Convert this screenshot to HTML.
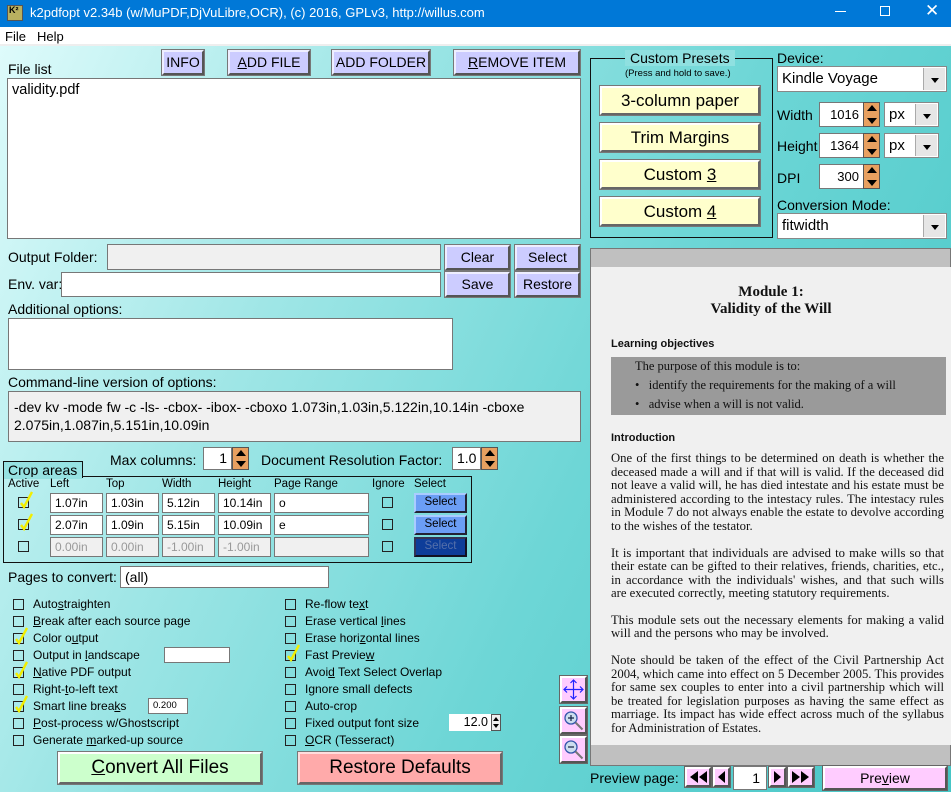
<!DOCTYPE html>
<html><head><meta charset="utf-8"><style>
*{box-sizing:border-box;margin:0;padding:0}
body{width:951px;height:792px;overflow:hidden;position:relative;font-family:"Liberation Sans","DejaVu Sans",sans-serif;font-size:13.5px;color:#000;background:#fff}
.a{position:absolute;white-space:nowrap}
#bg{position:absolute;left:0;top:46px;width:951px;height:746px;background:linear-gradient(115deg,#defbfb 0%,#9fe6e6 30%,#6dd6d6 60%,#45c6c6 100%)}
.btn{position:absolute;background:#ccccff;border:2px solid;border-color:#eeeeff #555 #555 #eeeeff;outline:1px solid #777;text-align:center;font-size:14px}
.in{position:absolute;background:#fff;border:1px solid #777;font-size:13.5px;padding-left:4px;white-space:nowrap;overflow:hidden}
.g{background:#f0f0f0}
.cb{position:absolute;width:11px;height:11px;border:1px solid #222;background:transparent}
.ck svg{position:absolute;left:0;top:-7px;overflow:visible}
.spin{position:absolute;width:17px;background:#e8a060;border:1px solid #555}
.spin::before{content:"";position:absolute;left:3px;top:2px;border-left:5px solid transparent;border-right:5px solid transparent;border-bottom:6px solid #000}
.spin::after{content:"";position:absolute;left:3px;bottom:2px;border-left:5px solid transparent;border-right:5px solid transparent;border-top:6px solid #000}
.sel{position:absolute;background:#fff;border:1px solid #888;font-size:15px;padding:3px 0 0 4px}
.sel b{position:absolute;right:1px;top:1px;bottom:1px;width:22px;background:#e6e6e6;border-left:1px solid #aaa}
.sel b::after{content:"";position:absolute;left:7px;top:10px;border-left:4px solid transparent;border-right:4px solid transparent;border-top:5px solid #000}
.yb{position:absolute;left:600px;width:160px;height:29px;background:#ffffcc;border:2px solid;border-color:#fff #666 #666 #fff;outline:1px solid #777;text-align:center;font-size:17px;line-height:25px}
.pk{position:absolute;background:#ffccff;border:2px solid;border-color:#fff #555 #555 #fff;outline:1px solid #666}
.pv{position:absolute;font-family:"Liberation Serif",serif;font-size:12.7px;white-space:nowrap;color:#111}
.j{text-align:justify;text-align-last:justify;width:333px;overflow:hidden}
u{text-decoration:underline}
</style></head><body>
<svg width="0" height="0" style="position:absolute"><defs><symbol id="ck" viewBox="0 0 14 18"><path d="M2 12l3 4 8-15" stroke="#f2ee00" stroke-width="2.4" fill="none"/></symbol></defs></svg>
<div class="a" style="left:0;top:0;width:951px;height:27px;background:#0078d7"></div>
<div class="a" style="left:7px;top:5px;width:16px;height:16px;background:#b8b060;border:1px solid #555;font-size:9px;font-weight:bold;line-height:9px;padding-left:1px">K²</div>
<div class="a" style="left:30px;top:5px;color:#fff;font-size:13px">k2pdfopt v2.34b (w/MuPDF,DjVuLibre,OCR), (c) 2016, GPLv3, http://willus.com</div>
<div class="a" style="left:835px;top:11px;width:11px;height:1px;background:#fff"></div>
<div class="a" style="left:880px;top:6px;width:10px;height:10px;border:1px solid #fff"></div>
<div class="a" style="left:925px;top:1px;color:#fff;font-size:17px">✕</div>
<div class="a" style="left:0;top:27px;width:951px;height:19px;background:#fff"></div>
<div class="a" style="left:5px;top:29px;font-size:13px">File</div>
<div class="a" style="left:37px;top:29px;font-size:13px">Help</div>
<div class="a" style="left:0;top:44px;width:951px;height:2px;background:#eee"></div>
<div id="bg"></div>

<div class="btn" style="left:162px;top:50px;width:42px;height:25px;line-height:21px">INFO</div>
<div class="btn" style="left:228px;top:50px;width:82px;height:25px;line-height:21px"><u>A</u>DD FILE</div>
<div class="btn" style="left:332px;top:50px;width:98px;height:25px;line-height:21px">ADD FOLDER</div>
<div class="btn" style="left:454px;top:50px;width:126px;height:25px;line-height:21px"><u>R</u>EMOVE ITEM</div>
<div class="a" style="left:8px;top:61px;font-size:14px">File list</div>
<div class="in" style="left:7px;top:78px;width:574px;height:161px;padding:3px 4px;font-size:14.5px">validity.pdf</div>

<div class="a" style="left:8px;top:249px;font-size:14px">Output Folder:</div>
<div class="in g" style="left:107px;top:244px;width:334px;height:26px"></div>
<div class="btn" style="left:445px;top:245px;width:65px;height:25px;line-height:21px">Clear</div>
<div class="btn" style="left:515px;top:245px;width:65px;height:25px;line-height:21px">Select</div>
<div class="a" style="left:8px;top:276px;font-size:14px">Env. var:</div>
<div class="in" style="left:61px;top:272px;width:380px;height:25px"></div>
<div class="btn" style="left:445px;top:272px;width:65px;height:25px;line-height:21px">Save</div>
<div class="btn" style="left:515px;top:272px;width:65px;height:25px;line-height:21px">Restore</div>
<div class="a" style="left:8px;top:301px;font-size:14px">Additional options:</div>
<div class="in" style="left:8px;top:318px;width:445px;height:52px"></div>
<div class="a" style="left:8px;top:374px;font-size:14px">Command-line version of options:</div>
<div class="in g" style="left:8px;top:391px;width:573px;height:51px;padding:6px 0 0 5px;font-size:14px;line-height:18px;white-space:normal">-dev kv -mode fw -c -ls- -cbox- -ibox- -cboxo 1.073in,1.03in,5.122in,10.14in -cboxe 2.075in,1.087in,5.151in,10.09in</div>

<div class="a" style="left:110px;top:452px;font-size:14px">Max columns:</div>
<div class="in" style="left:203px;top:447px;width:29px;height:23px;text-align:right;padding-right:4px;font-size:14px;line-height:21px">1</div>
<div class="spin" style="left:232px;top:447px;height:23px"></div>
<div class="a" style="left:261px;top:452px;font-size:14px">Document Resolution Factor:</div>
<div class="in" style="left:452px;top:447px;width:29px;height:23px;font-size:14px;line-height:21px">1.0</div>
<div class="spin" style="left:481px;top:447px;height:23px"></div>

<div class="a" style="left:3px;top:476px;width:469px;height:87px;border:1px solid #111"></div>
<div class="a" style="left:3px;top:461px;width:80px;height:17px;border:1px solid #111;border-bottom:none;background:#96e2e2;font-size:14px;padding-left:4px">Crop areas</div>
<div class="a" style="left:4px;top:477px;width:78px;height:2px;background:#96e2e2"></div>
<div class="a" style="left:8px;top:478px;font-size:11.5px">Active</div>
<div class="a" style="left:50px;top:478px;font-size:11.5px">Left</div>
<div class="a" style="left:106px;top:478px;font-size:11.5px">Top</div>
<div class="a" style="left:162px;top:478px;font-size:11.5px">Width</div>
<div class="a" style="left:218px;top:478px;font-size:11.5px">Height</div>
<div class="a" style="left:274px;top:478px;font-size:11.5px">Page Range</div>
<div class="a" style="left:372px;top:478px;font-size:11.5px">Ignore</div>
<div class="a" style="left:414px;top:478px;font-size:11.5px">Select</div>

<div class="cb ck" style="left:18px;top:497px"><svg width="14" height="18"><use href="#ck"/></svg></div>
<div class="in" style="left:50px;top:493px;width:53px;height:20px;font-size:12px;line-height:18px">1.07in</div>
<div class="in" style="left:106px;top:493px;width:53px;height:20px;font-size:12px;line-height:18px">1.03in</div>
<div class="in" style="left:162px;top:493px;width:53px;height:20px;font-size:12px;line-height:18px">5.12in</div>
<div class="in" style="left:218px;top:493px;width:53px;height:20px;font-size:12px;line-height:18px">10.14in</div>
<div class="in" style="left:274px;top:493px;width:95px;height:20px;font-size:12px;line-height:18px">o</div>
<div class="cb" style="left:382px;top:497px"></div>
<div class="a" style="left:414px;top:493px;width:53px;height:20px;background:#6b9ef5;border:2px solid;border-color:#aaccff #223 #223 #aaccff;font-size:11.5px;text-align:center;line-height:15px">Select</div>

<div class="cb ck" style="left:18px;top:519px"><svg width="14" height="18"><use href="#ck"/></svg></div>
<div class="in" style="left:50px;top:515px;width:53px;height:20px;font-size:12px;line-height:18px">2.07in</div>
<div class="in" style="left:106px;top:515px;width:53px;height:20px;font-size:12px;line-height:18px">1.09in</div>
<div class="in" style="left:162px;top:515px;width:53px;height:20px;font-size:12px;line-height:18px">5.15in</div>
<div class="in" style="left:218px;top:515px;width:53px;height:20px;font-size:12px;line-height:18px">10.09in</div>
<div class="in" style="left:274px;top:515px;width:95px;height:20px;font-size:12px;line-height:18px">e</div>
<div class="cb" style="left:382px;top:519px"></div>
<div class="a" style="left:414px;top:515px;width:53px;height:20px;background:#6b9ef5;border:2px solid;border-color:#aaccff #223 #223 #aaccff;font-size:11.5px;text-align:center;line-height:15px">Select</div>

<div class="cb" style="left:18px;top:541px"></div>
<div class="in g" style="left:50px;top:537px;width:53px;height:20px;font-size:12px;line-height:18px;color:#999">0.00in</div>
<div class="in g" style="left:106px;top:537px;width:53px;height:20px;font-size:12px;line-height:18px;color:#999">0.00in</div>
<div class="in g" style="left:162px;top:537px;width:53px;height:20px;font-size:12px;line-height:18px;color:#999">-1.00in</div>
<div class="in g" style="left:218px;top:537px;width:53px;height:20px;font-size:12px;line-height:18px;color:#999">-1.00in</div>
<div class="in g" style="left:274px;top:537px;width:95px;height:20px"></div>
<div class="cb" style="left:382px;top:541px"></div>
<div class="a" style="left:414px;top:537px;width:53px;height:20px;background:#0d3d99;border:2px solid;border-color:#335 #112 #112 #335;font-size:11.5px;text-align:center;line-height:15px;color:#5570aa">Select</div>

<div class="a" style="left:8px;top:569px;font-size:14px">Pages to convert:</div>
<div class="in" style="left:120px;top:566px;width:209px;height:22px;font-size:14px;line-height:20px">(all)</div>

<div style="font-size:12px">
<div class="cb" style="left:13px;top:599px"></div><div class="a" style="left:33px;top:597px">Auto<u>s</u>traighten</div>
<div class="cb" style="left:13px;top:616px"></div><div class="a" style="left:33px;top:614px"><u>B</u>reak after each source page</div>
<div class="cb ck" style="left:13px;top:633px"><svg width="14" height="18"><use href="#ck"/></svg></div><div class="a" style="left:33px;top:631px">Color o<u>u</u>tput</div>
<div class="cb" style="left:13px;top:650px"></div><div class="a" style="left:33px;top:648px">Output in <u>l</u>andscape</div>
<div class="in" style="left:164px;top:647px;width:66px;height:16px"></div>
<div class="cb ck" style="left:13px;top:667px"><svg width="14" height="18"><use href="#ck"/></svg></div><div class="a" style="left:33px;top:665px"><u>N</u>ative PDF output</div>
<div class="cb" style="left:13px;top:684px"></div><div class="a" style="left:33px;top:682px">Right-<u>t</u>o-left text</div>
<div class="cb ck" style="left:13px;top:701px"><svg width="14" height="18"><use href="#ck"/></svg></div><div class="a" style="left:33px;top:699px">Smart line brea<u>k</u>s</div>
<div class="in" style="left:148px;top:698px;width:40px;height:16px;font-size:9.5px;line-height:14px">0.200</div>
<div class="cb" style="left:13px;top:718px"></div><div class="a" style="left:33px;top:716px"><u>P</u>ost-process w/Ghostscript</div>
<div class="cb" style="left:13px;top:735px"></div><div class="a" style="left:33px;top:733px">Generate <u>m</u>arked-up source</div>

<div class="cb" style="left:285px;top:599px"></div><div class="a" style="left:305px;top:597px">Re-flow te<u>x</u>t</div>
<div class="cb" style="left:285px;top:616px"></div><div class="a" style="left:305px;top:614px">Erase vertical <u>l</u>ines</div>
<div class="cb" style="left:285px;top:633px"></div><div class="a" style="left:305px;top:631px">Erase hori<u>z</u>ontal lines</div>
<div class="cb ck" style="left:285px;top:650px"><svg width="14" height="18"><use href="#ck"/></svg></div><div class="a" style="left:305px;top:648px">Fast Previe<u>w</u></div>
<div class="cb" style="left:285px;top:667px"></div><div class="a" style="left:305px;top:665px">Avoi<u>d</u> Text Select Overlap</div>
<div class="cb" style="left:285px;top:684px"></div><div class="a" style="left:305px;top:682px">Ignore small defects</div>
<div class="cb" style="left:285px;top:701px"></div><div class="a" style="left:305px;top:699px">Auto-crop</div>
<div class="cb" style="left:285px;top:718px"></div><div class="a" style="left:305px;top:716px">Fixed output font size</div>
<div class="a" style="left:449px;top:714px;width:42px;height:17px;background:#fff;text-align:right;padding-right:3px;font-size:12.5px;line-height:17px">12.0</div>
<div class="a" style="left:491px;top:714px;width:10px;height:17px;background:#eee;border:1px solid #555"><svg width="8" height="15" style="position:absolute;left:0;top:0"><path d="M1 6L4 2 7 6zM1 9l3 4 3-4z" fill="#000"/></svg></div>
<div class="cb" style="left:285px;top:735px"></div><div class="a" style="left:305px;top:733px"><u>O</u>CR (Tesseract)</div>
</div>

<div class="a" style="left:58px;top:752px;width:204px;height:32px;background:#ccffcc;border:2px solid;border-color:#fff #666 #666 #fff;outline:1px solid #777;text-align:center;font-size:19px;line-height:28px"><u>C</u>onvert All Files</div>
<div class="a" style="left:298px;top:752px;width:204px;height:32px;background:#ffaaaa;border:2px solid;border-color:#fdd #666 #666 #fdd;outline:1px solid #777;text-align:center;font-size:19px;line-height:28px">Restore Defaults</div>

<!-- presets -->
<div class="a" style="left:590px;top:58px;width:183px;height:180px;border:1px solid #111"></div>
<div class="a" style="left:625px;top:50px;padding:0 5px;background:#8fe0e0;font-size:14px">Custom Presets</div>
<div class="a" style="left:625px;top:68px;font-size:9.5px">(Press and hold to save.)</div>
<div class="yb" style="top:86px">3-column paper</div>
<div class="yb" style="top:123px">Trim Margins</div>
<div class="yb" style="top:160px">Custom <u>3</u></div>
<div class="yb" style="top:197px">Custom <u>4</u></div>

<div class="a" style="left:777px;top:50px;font-size:14px">Device:</div>
<div class="sel" style="left:777px;top:66px;width:170px;height:26px">Kindle Voyage<b></b></div>
<div class="a" style="left:777px;top:107px;font-size:14px">Width</div>
<div class="in" style="left:819px;top:102px;width:45px;height:25px;text-align:right;padding-right:4px;font-size:13px;line-height:23px">1016</div>
<div class="spin" style="left:863px;top:102px;height:25px"></div>
<div class="sel" style="left:884px;top:102px;width:55px;height:25px">px<b></b></div>
<div class="a" style="left:777px;top:138px;font-size:14px">Height</div>
<div class="in" style="left:819px;top:133px;width:45px;height:25px;text-align:right;padding-right:4px;font-size:13px;line-height:23px">1364</div>
<div class="spin" style="left:863px;top:133px;height:25px"></div>
<div class="sel" style="left:884px;top:133px;width:55px;height:25px">px<b></b></div>
<div class="a" style="left:777px;top:170px;font-size:14px">DPI</div>
<div class="in" style="left:819px;top:164px;width:45px;height:25px;text-align:right;padding-right:4px;font-size:13px;line-height:23px">300</div>
<div class="spin" style="left:863px;top:164px;height:25px"></div>
<div class="a" style="left:777px;top:197px;font-size:14px">Conversion Mode:</div>
<div class="sel" style="left:777px;top:213px;width:170px;height:26px">fitwidth<b></b></div>

<!-- preview -->
<div class="a" style="left:590px;top:248px;width:361px;height:518px;background:#c0c0c0;border:1px solid #777"></div>
<div class="a" style="left:591px;top:267px;width:360px;height:478px;background:#f0f0f0"></div>
<div class="pv" style="left:591px;top:284px;width:360px;text-align:center;font-weight:bold;font-size:15px;line-height:17px">Module 1:<br>Validity of the Will</div>
<div class="pv" style="left:611px;top:338px;font-family:'Liberation Sans',sans-serif;font-weight:bold;font-size:11px">Learning objectives</div>
<div class="a" style="left:611px;top:357px;width:335px;height:58px;background:#9a9a9a"></div>
<div class="pv" style="left:635px;top:359px;font-size:12.5px">The purpose of this module is to:</div>
<div class="pv" style="left:635px;top:378px;font-size:12.5px">•&nbsp;&nbsp; identify the requirements for the making of a will</div>
<div class="pv" style="left:635px;top:397px;font-size:12.5px">•&nbsp;&nbsp; advise when a will is not valid.</div>
<div class="pv" style="left:611px;top:432px;font-family:'Liberation Sans',sans-serif;font-weight:bold;font-size:11px">Introduction</div>
<div class="pv j" style="left:611px;top:451px">One of the first things to be determined on death is whether the</div>
<div class="pv j" style="left:611px;top:465px">deceased made a will and if that will is valid. If the deceased did</div>
<div class="pv j" style="left:611px;top:478px">not leave a valid will, he has died intestate and his estate must be</div>
<div class="pv j" style="left:611px;top:492px">administered according to the intestacy rules. The intestacy rules</div>
<div class="pv j" style="left:611px;top:505px">in Module 7 do not always enable the estate to devolve according</div>
<div class="pv" style="left:611px;top:519px">to the wishes of the testator.</div>
<div class="pv j" style="left:611px;top:546px">It is important that individuals are advised to make wills so that</div>
<div class="pv j" style="left:611px;top:559px">their estate can be gifted to their relatives, friends, charities, etc.,</div>
<div class="pv j" style="left:611px;top:573px">in accordance with the individuals' wishes, and that such wills</div>
<div class="pv" style="left:611px;top:586px">are executed correctly, meeting statutory requirements.</div>
<div class="pv j" style="left:611px;top:613px">This module sets out the necessary elements for making a valid</div>
<div class="pv" style="left:611px;top:626px">will and the persons who may be involved.</div>
<div class="pv j" style="left:611px;top:653px">Note should be taken of the effect of the Civil Partnership Act</div>
<div class="pv j" style="left:611px;top:667px">2004, which came into effect on 5 December 2005. This provides</div>
<div class="pv j" style="left:611px;top:680px">for same sex couples to enter into a civil partnership which will</div>
<div class="pv j" style="left:611px;top:694px">be treated for legislation purposes as having the same effect as</div>
<div class="pv j" style="left:611px;top:707px">marriage. Its impact has wide effect across much of the syllabus</div>
<div class="pv" style="left:611px;top:721px">for Administration of Estates.</div>

<div class="pk" style="left:560px;top:676px;width:27px;height:27px"><svg width="23" height="23" viewBox="0 0 23 23"><path d="M11.5 2v19M2 11.5h19M8.5 5l3-3 3 3M8.5 18l3 3 3-3M5 8.5l-3 3 3 3M18 8.5l3 3-3 3" stroke="#22f" stroke-width="1.2" fill="none"/></svg></div>
<div class="pk" style="left:560px;top:707px;width:27px;height:27px"><svg width="23" height="23" viewBox="0 0 23 23"><circle cx="9" cy="9" r="6" fill="#cde" stroke="#35a" stroke-width="1.3"/><path d="M6 9h6M9 6v6" stroke="#124" stroke-width="1.2"/><path d="M13.5 13.5l7 7" stroke="#777" stroke-width="2"/></svg></div>
<div class="pk" style="left:560px;top:736px;width:27px;height:27px"><svg width="23" height="23" viewBox="0 0 23 23"><circle cx="9" cy="9" r="6" fill="#cde" stroke="#35a" stroke-width="1.3"/><path d="M6 9h6" stroke="#124" stroke-width="1.2"/><path d="M13.5 13.5l7 7" stroke="#777" stroke-width="2"/></svg></div>

<div class="a" style="left:590px;top:770px;font-size:14px">Preview page:</div>
<div class="pk" style="left:685px;top:767px;width:26px;height:20px"><svg width="22" height="16"><path d="M11 2L3 8l8 6zM20 2l-8 6 8 6z" fill="#000"/></svg></div>
<div class="pk" style="left:713px;top:767px;width:17px;height:20px"><svg width="13" height="16"><path d="M10 2L3 8l7 6z" fill="#000"/></svg></div>
<div class="a" style="left:733px;top:766px;width:34px;height:24px;background:#fff;border:1px solid #777;text-align:right;padding-right:6px;font-size:14px;line-height:22px">1</div>
<div class="pk" style="left:769px;top:767px;width:17px;height:20px"><svg width="13" height="16"><path d="M3 2l7 6-7 6z" fill="#000"/></svg></div>
<div class="pk" style="left:788px;top:767px;width:26px;height:20px"><svg width="22" height="16"><path d="M2 2l8 6-8 6zM11 2l8 6-8 6z" fill="#000"/></svg></div>
<div class="pk" style="left:823px;top:766px;width:124px;height:24px;text-align:center;font-size:14px;line-height:20px">Pre<u>v</u>iew</div>
</body></html>
